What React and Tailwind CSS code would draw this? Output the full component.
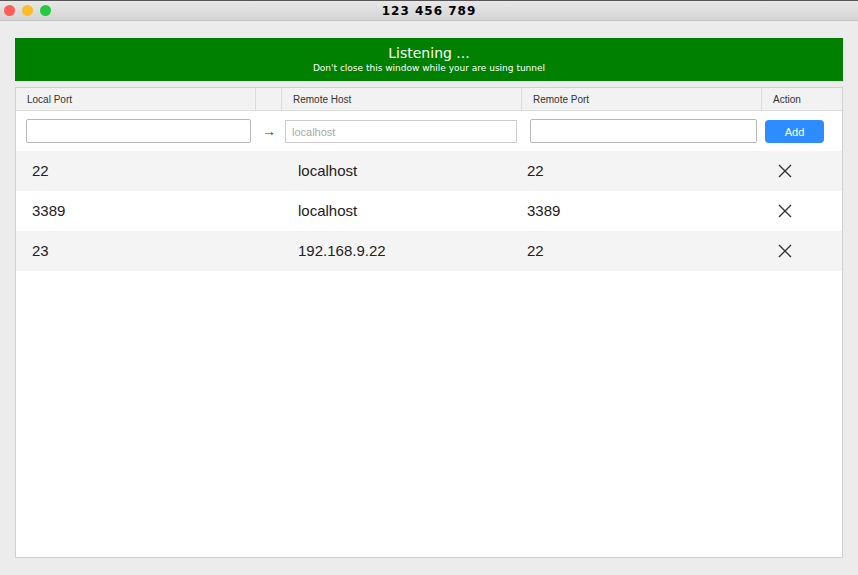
const rows = [
  { local: "22", host: "localhost", remote: "22" },
  { local: "3389", host: "localhost", remote: "3389" },
  { local: "23", host: "192.168.9.22", remote: "22" },
];

const X = () => (
  <svg width="16" height="16" viewBox="0 0 16 16" stroke="#333" strokeWidth="1.4" fill="none">
    <path d="M2 2L14 14M14 2L2 14" />
  </svg>
);

export default function App() {
  return (
    <div className="w-[858px] h-[575px] bg-[#ececec] flex flex-col overflow-hidden" style={{ fontFamily: "'Liberation Sans', Arial, sans-serif" }}>
      <div className="h-[21px] shrink-0 border-t border-[#555] bg-gradient-to-b from-[#e8e8e8] to-[#d4d4d4] border-b border-b-[#c4c4c4] relative flex items-center justify-center">
        <div className="absolute left-[4px] top-[4px] flex gap-[7px]">
          <span className="w-[11px] h-[11px] rounded-full bg-[#fc5f57]" />
          <span className="w-[11px] h-[11px] rounded-full bg-[#fdbc2e]" />
          <span className="w-[11px] h-[11px] rounded-full bg-[#28c840]" />
        </div>
        <span className="text-[12px] font-bold tracking-[1px] text-black" style={{ fontFamily: "'DejaVu Sans', sans-serif" }}>123 456 789</span>
      </div>
      <div className="flex-1 px-[15px] pt-[17px] pb-[17px] flex flex-col">
        <div className="h-[43px] bg-[#008000] text-white flex flex-col items-center justify-center" style={{ fontFamily: "'DejaVu Sans', sans-serif" }}>
          <div className="text-[14px] leading-[17px]">Listening ...</div>
          <div className="text-[9px] leading-[12px]">Don't close this window while your are using tunnel</div>
        </div>
        <div className="mt-[6px] flex-1 bg-white border border-[#d0d0d0] flex flex-col">
          <div className="h-[23px] bg-[#f2f2f2] border-b border-[#dcdcdc] flex text-[10px] text-[#333]">
            <div className="w-[240px] px-[11px] flex items-center border-r border-[#dcdcdc]">Local Port</div>
            <div className="w-[26px] border-r border-[#dcdcdc]" />
            <div className="w-[240px] px-[11px] flex items-center border-r border-[#dcdcdc]">Remote Host</div>
            <div className="w-[240px] px-[11px] flex items-center border-r border-[#dcdcdc]">Remote Port</div>
            <div className="flex-1 px-[11px] flex items-center">Action</div>
          </div>
          <div className="h-[40px] flex items-center">
            <div className="w-[240px] pl-[10px] pr-[5px]"><input className="w-full h-[24px] border border-[#b8b8b8] rounded-[2px] bg-white" /></div>
            <div className="w-[26px] flex justify-center text-[#444] text-[14px]">→</div>
            <div className="w-[240px] pl-[3px] pr-[5px]"><input placeholder="localhost" className="w-full h-[23px] border border-[#ccc] px-[6px] text-[11px] placeholder:text-[#aaa]" /></div>
            <div className="w-[240px] pl-[8px] pr-[5px]"><input className="w-full h-[24px] border border-[#b8b8b8] rounded-[2px]" /></div>
            <div className="flex-1 pl-[3px]"><button className="w-[59px] h-[23px] bg-[#2d8cff] text-white text-[11px] rounded-[4px]">Add</button></div>
          </div>
          {rows.map((r, i) => (
            <div key={i} className={`h-[40px] flex items-center text-[15px] text-[#222] ${i % 2 === 0 ? "bg-[#f4f4f5]" : "bg-white"}`}>
              <div className="w-[266px] pl-[16px]">{r.local}</div>
              <div className="w-[240px] pl-[16px]">{r.host}</div>
              <div className="w-[240px] pl-[5px]">{r.remote}</div>
              <div className="flex-1 pl-[15px]"><X /></div>
            </div>
          ))}
        </div>
      </div>
    </div>
  );
}
